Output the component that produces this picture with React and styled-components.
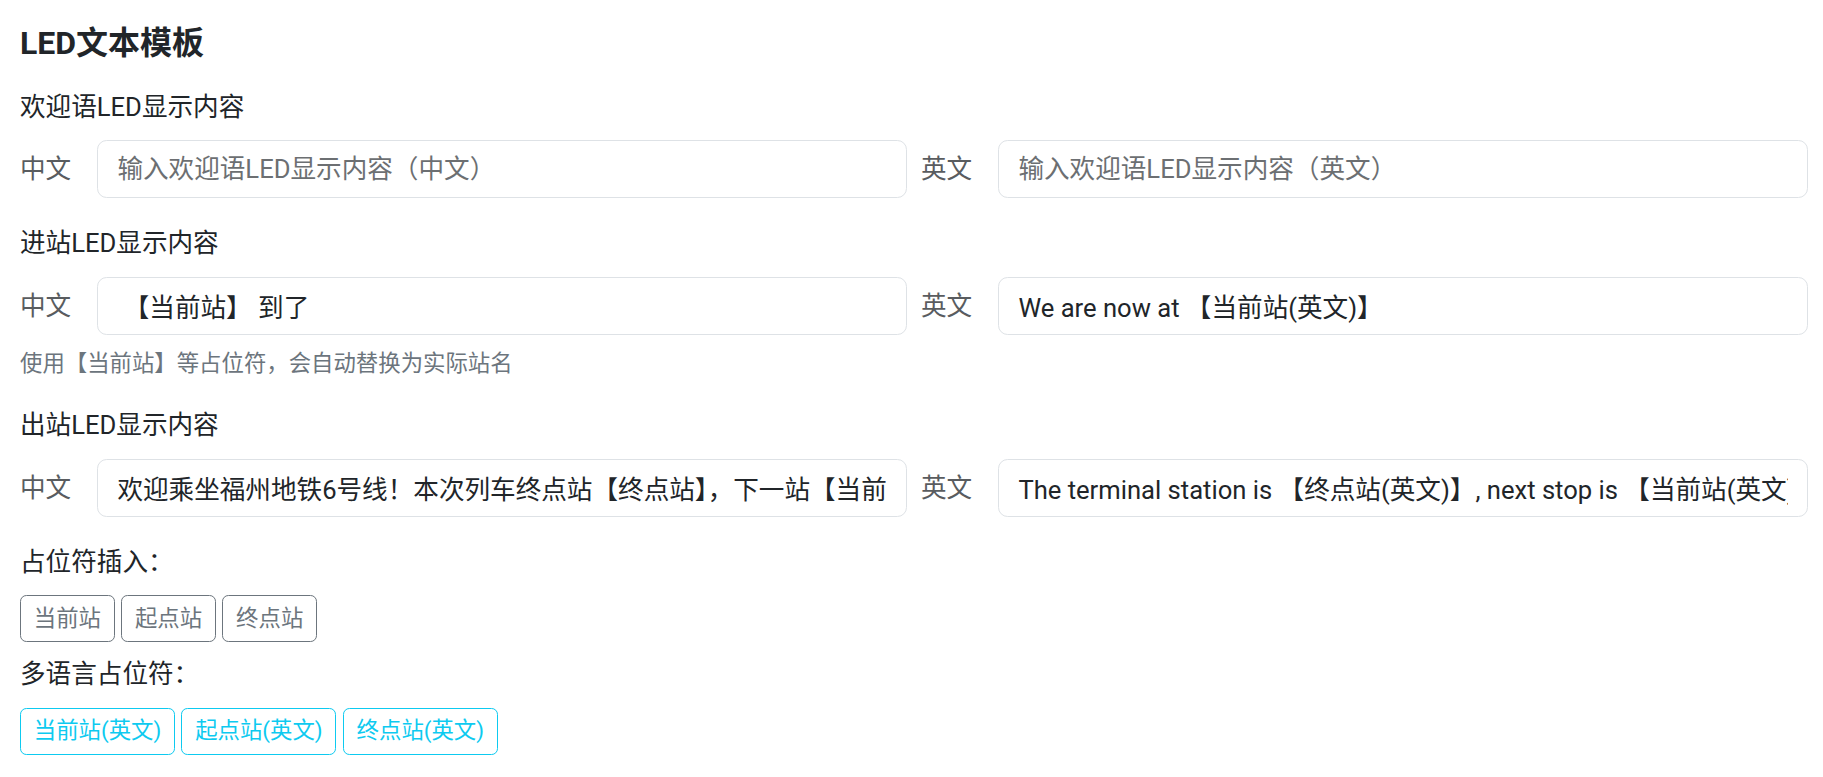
import React from 'react';
import styled, { createGlobalStyle } from 'styled-components';

const GlobalStyle = createGlobalStyle`
  html, body {
    margin: 0;
    padding: 0;
    background: #fff;
  }
  body {
    font-family: Roboto, "Noto Sans CJK SC", sans-serif;
    font-size: 25.6px;
    line-height: 1.5;
    color: #212529;
  }
  * { box-sizing: border-box; }
`

const Page = styled.div`
  padding: 24px 15px 20px 20px;
`

const Title = styled.h5`
  margin: 0 0 25.6px;
  font-size: 32px;
  line-height: 1.2;
  font-weight: 700;
`

const Section = styled.div`
  margin-bottom: 26px;
`

const SectionLabel = styled.label`
  display: block;
  margin-bottom: 14px;
  line-height: 1.5;
`

const LangRow = styled.div`
  display: grid;
  grid-template-columns: 1fr 1fr;
  column-gap: 14px;
`

const LangField = styled.div`
  display: flex;
  align-items: center;
`

const LangLabel = styled.span`
  flex: none;
  margin-right: 26px;
  color: #595c5f;
`

const Input = styled.input`
  flex: 1;
  min-width: 0;
  height: 58px;
  padding: 9px 19.2px;
  font: inherit;
  line-height: 1.5;
  color: #212529;
  background: #fff;
  border: 1px solid #dee2e6;
  border-radius: 9.6px;
  outline: none;

  &::placeholder {
    color: #6c6f72;
  }
`

const Help = styled.div`
  margin-top: 12px;
  font-size: 22.4px;
  line-height: 1.5;
  color: #6c757d;
`

const GroupLabel = styled.label`
  display: block;
  margin-bottom: 14px;
`

const ButtonRow = styled.div`
  display: flex;
  gap: 6.4px;
  margin-bottom: ${props => props.$last ? '0' : '13px'};
`

const ChipButton = styled.button`
  height: 47px;
  padding: 0 12.8px;
  font-family: inherit;
  font-size: 22.4px;
  line-height: 1.5;
  background: #fff;
  border: 1px solid ${props => props.$tone === 'info' ? '#0dcaf0' : '#6c757d'};
  color: ${props => props.$tone === 'info' ? '#0dcaf0' : '#6c757d'};
  border-radius: 6.4px;
  cursor: pointer;
`

const sections = [
  {
    title: '欢迎语LED显示内容',
    zh: { value: '', placeholder: '输入欢迎语LED显示内容（中文）' },
    en: { value: '', placeholder: '输入欢迎语LED显示内容（英文）' }
  },
  {
    title: '进站LED显示内容',
    zh: { value: ' 【当前站】 到了', placeholder: '' },
    en: { value: 'We are now at 【当前站(英文)】', placeholder: '' },
    help: '使用【当前站】等占位符，会自动替换为实际站名'
  },
  {
    title: '出站LED显示内容',
    zh: { value: '欢迎乘坐福州地铁6号线！本次列车终点站【终点站】，下一站【当前站】', placeholder: '' },
    en: { value: 'The terminal station is 【终点站(英文)】, next stop is 【当前站(英文)】', placeholder: '' }
  }
];

const basicTags = ['当前站', '起点站', '终点站'];
const langTags = ['当前站(英文)', '起点站(英文)', '终点站(英文)'];

function LedSection({ data }) {
  return (
    <Section>
      <SectionLabel>{data.title}</SectionLabel>
      <LangRow>
        <LangField>
          <LangLabel>{'中文'}</LangLabel>
          <Input defaultValue={data.zh.value} placeholder={data.zh.placeholder} />
        </LangField>
        <LangField>
          <LangLabel>{'英文'}</LangLabel>
          <Input defaultValue={data.en.value} placeholder={data.en.placeholder} />
        </LangField>
      </LangRow>
      {data.help && <Help>{data.help}</Help>}
    </Section>
  );
}

export default function App() {
  return (
    <Page>
      <GlobalStyle />
      <Title>{'LED文本模板'}</Title>
      {sections.map(s => <LedSection key={s.title} data={s} />)}

      <GroupLabel>{'占位符插入：'}</GroupLabel>
      <ButtonRow>
        {basicTags.map(t => <ChipButton key={t}>{t}</ChipButton>)}
      </ButtonRow>

      <GroupLabel>{'多语言占位符：'}</GroupLabel>
      <ButtonRow $last>
        {langTags.map(t => <ChipButton key={t} $tone="info">{t}</ChipButton>)}
      </ButtonRow>
    </Page>
  );
}
